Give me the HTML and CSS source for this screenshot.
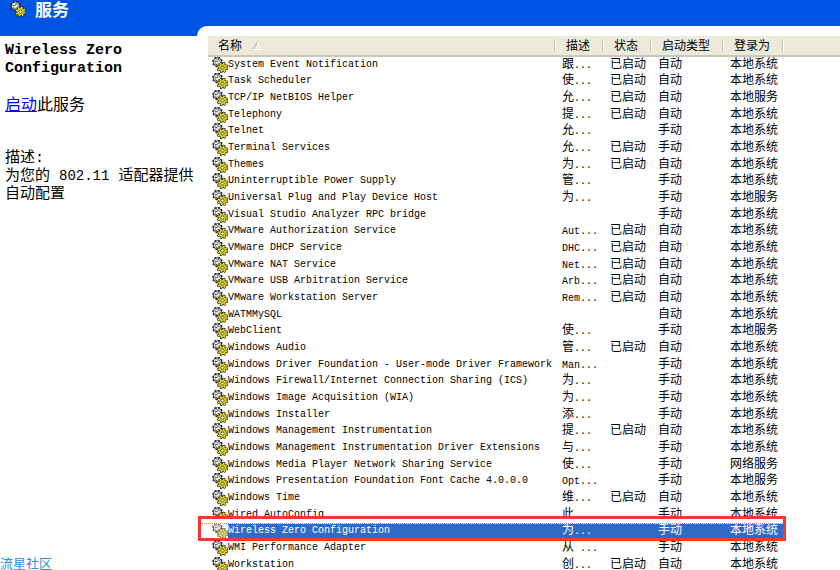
FILE: index.html
```
<!DOCTYPE html>
<html lang="zh-CN">
<head>
<meta charset="utf-8">
<title>服务</title>
<link rel="stylesheet" href="styles.css">
</head>
<body>
<svg class="sprite" aria-hidden="true">
  <symbol id="gears" viewBox="0 0 16 16">
    <circle cx="5.500" cy="5" r="4.200" fill="#d4d4d4" stroke="#444" stroke-width="1"/>
    <circle cx="5.500" cy="5" r="4.600" fill="none" stroke="#222" stroke-width="1.500" stroke-dasharray="1.800 1.800"/>
    <path d="M3 4.500h2V2.500M6.500 2.500l1.500 2M3 6.500l2 1.500M7 6v2" stroke="#555" stroke-width="1" fill="none"/>
    <path d="M4 3.500h1M6 5h2M4 6h1" stroke="#fff"/>
    <circle cx="10.500" cy="10.500" r="4.600" fill="#333"/>
    <circle cx="10.500" cy="10.500" r="4.900" fill="none" stroke="#222" stroke-width="1.600" stroke-dasharray="2.400 1.450"/>
    <circle cx="10.500" cy="10.500" r="4" fill="none" stroke="#dcd21c" stroke-width="2" stroke-dasharray="1.570 1.570"/>
    <circle cx="10.500" cy="10.500" r="2.700" fill="none" stroke="#dcd21c" stroke-width="1.600"/>
    <circle cx="10.500" cy="10.500" r="1.500" fill="#fff" stroke="#554" stroke-width=".6"/>
  </symbol>
</svg>
<header class="banner">
  <svg class="gear"><use href="#gears"/></svg>
  <h1>服务</h1>
</header>
<div class="layout">
  <aside class="details">
    <h2>Wireless Zero Configuration</h2>
    <p class="action"><a href="#start">启动</a>此服务</p>
    <p class="about">描述:<br>为您的 <span class="model">802.11</span> 适配器提供自动配置</p>
    <p class="community">流星社区</p>
  </aside>
  <main class="panel">
    <table class="services">
      <colgroup><col class="c-name"><col class="c-desc"><col class="c-state"><col class="c-type"><col class="c-logon"><col></colgroup>
      <thead>
        <tr><th>名称<svg class="sort" viewBox="0 0 8 8"><path d="M0 7.500L4 .5" stroke="#aca899"/><path d="M4 .5L7.500 7.500H0" fill="none" stroke="#fff"/></svg></th><th>描述</th><th>状态</th><th>启动类型</th><th>登录为</th><th></th></tr>
      </thead>
      <tbody id="rows"></tbody>
    </table>
  </main>
</div>
<script src="services.js"></script>
</body>
</html>
```
FILE: services.js
```
const SYSTEM = '本地系统', LOCAL = '本地服务', NETWORK = '网络服务';
const ON = '已启动', AUTO = '自动', MANUAL = '手动';
const services = [
  ['System Event Notification', '跟...', ON, AUTO, SYSTEM],
  ['Task Scheduler', '使...', ON, AUTO, SYSTEM],
  ['TCP/IP NetBIOS Helper', '允...', ON, AUTO, LOCAL],
  ['Telephony', '提...', ON, AUTO, SYSTEM],
  ['Telnet', '允...', '', MANUAL, SYSTEM],
  ['Terminal Services', '允...', ON, MANUAL, SYSTEM],
  ['Themes', '为...', ON, AUTO, SYSTEM],
  ['Uninterruptible Power Supply', '管...', '', MANUAL, SYSTEM],
  ['Universal Plug and Play Device Host', '为...', '', MANUAL, LOCAL],
  ['Visual Studio Analyzer RPC bridge', '', '', MANUAL, SYSTEM],
  ['VMware Authorization Service', 'Aut...', ON, AUTO, SYSTEM],
  ['VMware DHCP Service', 'DHC...', ON, AUTO, SYSTEM],
  ['VMware NAT Service', 'Net...', ON, AUTO, SYSTEM],
  ['VMware USB Arbitration Service', 'Arb...', ON, AUTO, SYSTEM],
  ['VMware Workstation Server', 'Rem...', ON, AUTO, SYSTEM],
  ['WATMMySQL', '', '', AUTO, SYSTEM],
  ['WebClient', '使...', '', MANUAL, LOCAL],
  ['Windows Audio', '管...', ON, AUTO, SYSTEM],
  ['Windows Driver Foundation - User-mode Driver Framework', 'Man...', '', MANUAL, SYSTEM],
  ['Windows Firewall/Internet Connection Sharing (ICS)', '为...', '', MANUAL, SYSTEM],
  ['Windows Image Acquisition (WIA)', '为...', '', MANUAL, SYSTEM],
  ['Windows Installer', '添...', '', MANUAL, SYSTEM],
  ['Windows Management Instrumentation', '提...', ON, AUTO, SYSTEM],
  ['Windows Management Instrumentation Driver Extensions', '与...', '', MANUAL, SYSTEM],
  ['Windows Media Player Network Sharing Service', '使...', '', MANUAL, NETWORK],
  ['Windows Presentation Foundation Font Cache 4.0.0.0', 'Opt...', '', MANUAL, LOCAL],
  ['Windows Time', '维...', ON, AUTO, SYSTEM],
  ['Wired AutoConfig', '此...', '', MANUAL, SYSTEM],
  ['Wireless Zero Configuration', '为...', '', MANUAL, SYSTEM],
  ['WMI Performance Adapter', '从 ...', '', MANUAL, SYSTEM],
  ['Workstation', '创...', ON, AUTO, SYSTEM]
];
const selected = 'Wireless Zero Configuration';
const latin = text => text.replace(/[\x20-\x7e]+/g, '<span class="latin">$&</span>');
document.getElementById('rows').innerHTML = services.map(([name, ...cells]) => {
  const isSelected = name === selected;
  return `<tr${isSelected ? ' class="selected"' : ''}><td><div class="name"><svg class="gear"><use href="#gears"/></svg><span>${name}</span></div>${isSelected ? '<div class="callout"></div>' : ''}</td>${cells.map(c => `<td>${latin(c)}</td>`).join('')}<td></td></tr>`;
}).join('');
```
FILE: styles.css
```
* { box-sizing: border-box; }
body {
  margin: 0;
  min-height: 100vh;
  display: flex;
  flex-direction: column;
  overflow: hidden;
  background: #fff;
  color: #000;
  font-family: "Liberation Mono", "Noto Sans CJK SC", monospace;
}
.sprite { position: absolute; width: 0; height: 0; }
.gear { width: 16px; height: 16px; flex: none; }
.banner {
  display: flex;
  gap: 9px;
  height: 36px;
  padding: 1px 10px;
  background: #0054e3;
  color: #fff;
}
.banner h1 { margin: 0; font-size: 17px; line-height: 22px; }
.layout { display: flex; flex: 1; }
.details {
  display: flex;
  flex-direction: column;
  width: 200px;
  flex: none;
  padding: 6px 0 0 5px;
}
.details h2 { margin: 0; font-size: 15px; line-height: 18px; }
.details p { margin: 0; }
.action { padding-top: 18px; font-size: 16px; line-height: 20px; }
.action a { color: #00f; }
.details .about { margin-top: 34px; font-size: 15px; line-height: 18px; }
.model { font-size: 14px; line-height: 14px; }
.details .community { margin: auto 0 0 -5px; color: #2b8fe8; font-size: 13px; line-height: 16px; }
.panel {
  flex: 1;
  margin: -10px 0 0 -3px;
  padding: 10px 0 0 11px;
  background: #fff;
  border-top-left-radius: 10px;
}
.services {
  width: 100%;
  table-layout: fixed;
  border-collapse: separate;
  border-spacing: 0;
  line-height: 16px;
  white-space: nowrap;
}
.c-name { width: 348px; }
.c-desc { width: 48px; }
.c-state { width: 48px; }
.c-type { width: 72px; }
.c-logon { width: 60px; }
th, td { padding: 0 0 0 6px; text-align: left; font-weight: normal; font-size: 12px; }
th {
  position: relative;
  height: 21px;
  padding: 3px 0 0 10px;
  background: #ebeadb;
  border-bottom: 2px solid #cbc7b8;
}
th:not(:last-child)::after {
  content: "";
  position: absolute;
  top: 3px;
  right: 0;
  width: 2px;
  height: 13px;
  background: linear-gradient(to right, #c7c5b2 50%, #fff 50%);
}
.sort { width: 8px; height: 8px; margin-left: 11px; }
td { height: 17px; vertical-align: top; }
tr:nth-child(3n+1) td { height: 16px; }
td:first-child { position: relative; padding-left: 4px; font-size: 10px; }
.latin { font-size: 10px; line-height: 10px; }
.name { display: flex; height: 16px; }
.selected td { background: #316ac5; color: #fff; }
.selected td:first-child { background: linear-gradient(to right, #fff 20px, #316ac5 20px); }
.selected .gear { opacity: .75; }
.selected td:last-child { background: #fff; }
.callout {
  position: absolute;
  top: -7px;
  left: -10px;
  width: 588px;
  height: 25px;
  border: 3px solid #fb3434;
}
.callout::before {
  content: "";
  display: block;
  height: 4px;
  background: #fff;
  border-bottom: 1px dotted #c98b4a;
}
```
